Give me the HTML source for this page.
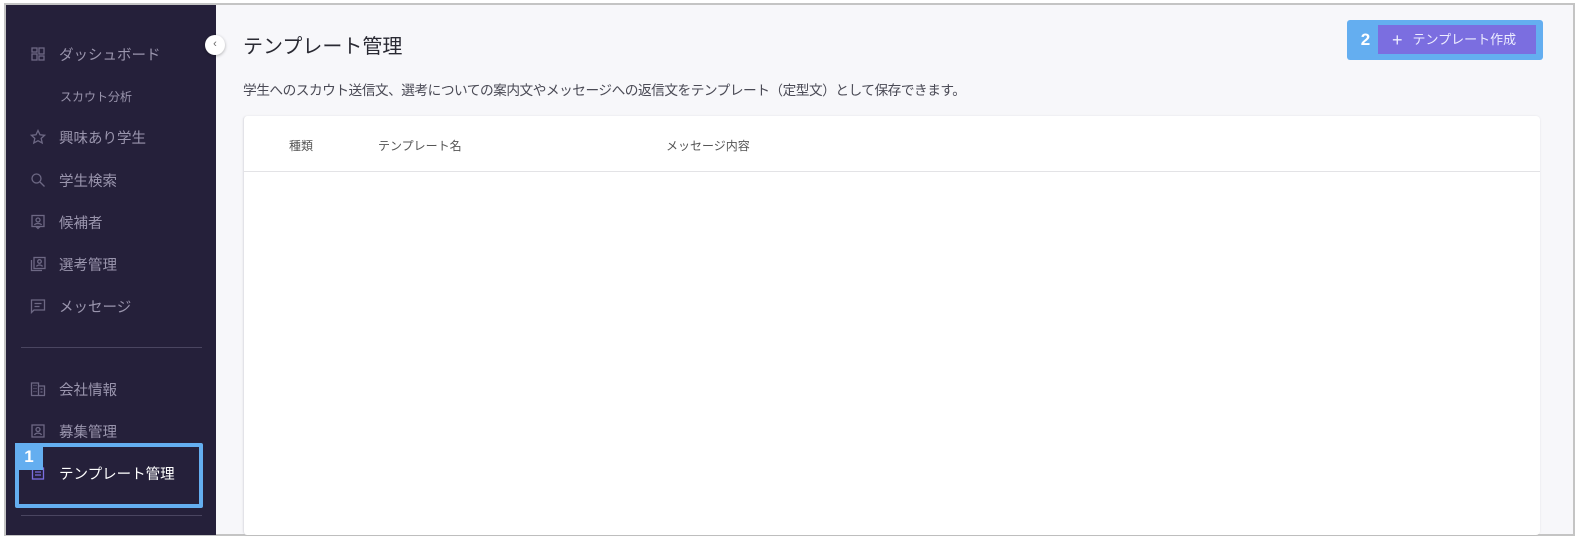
<!DOCTYPE html>
<html><head><meta charset="utf-8"><style>
*{margin:0;padding:0;box-sizing:border-box}
body{width:1580px;height:542px;background:#fff;font-family:"Liberation Sans","Noto Sans CJK JP",sans-serif;position:relative;overflow:hidden}
.frame{position:absolute;left:4px;top:3px;width:1571px;height:533px;border:2px solid #c4c4c4;background:#f7f7fa}
.side{position:absolute;left:6px;top:5px;width:210px;height:530px;background:#25203a}
.item{position:absolute;left:30px;color:#9a95ad;font-size:14.5px;display:flex;align-items:center;height:20px}
.item svg{width:16px;height:16px;margin-right:13px;stroke:#6d6884;fill:none;stroke-width:1.3}
.sub{position:absolute;left:60px;color:#9a95ad;font-size:12px}
.hr{position:absolute;left:21px;width:181px;height:1px;background:#4a4560}
.toggle{position:absolute;left:205px;top:35px;width:20px;height:20px;border-radius:50%;background:#fff;font-size:11px;color:#666;text-align:center;line-height:19px;box-shadow:0 1px 3px rgba(0,0,0,.3)}
.t{position:absolute;left:243px;top:30px;font-size:20px;color:#2a2a33}
.d{position:absolute;left:243px;top:79px;font-size:13.7px;color:#4a4a55;letter-spacing:-0.5px;white-space:nowrap}
.card{position:absolute;left:243px;top:116px;width:1297px;height:419px;background:#fff;border-radius:4px;box-shadow:0 0 2px rgba(0,0,0,.08);border-left:1px solid #e3e3e8}
.th{position:absolute;top:137px;font-size:12px;color:#555}
.line{position:absolute;left:243px;top:171px;width:1297px;height:1px;background:#e3e3e6}
</style></head><body>
<div class="frame"></div>
<div class="side">
</div>
<div class="item" style="top:44px"><svg viewBox="0 0 16 16"><rect x="2" y="2" width="5" height="4"/><rect x="9" y="2" width="5" height="6"/><rect x="2" y="8" width="5" height="6"/><rect x="9" y="10" width="5" height="4"/></svg>ダッシュボード</div>
<div class="sub" style="top:88px">スカウト分析</div>
<div class="item" style="top:127px"><svg viewBox="0 0 16 16"><path d="M8 1.5l2 4.3 4.6.5-3.4 3.1 1 4.6L8 11.7 3.8 14l1-4.6L1.4 6.3 6 5.8z"/></svg>興味あり学生</div>
<div class="item" style="top:170px"><svg viewBox="0 0 16 16"><circle cx="6.5" cy="6.5" r="4.5"/><path d="M10 10l4.5 4.5"/></svg>学生検索</div>
<div class="item" style="top:212px"><svg viewBox="0 0 16 16"><rect x="2" y="1.5" width="12" height="11"/><circle cx="8" cy="6" r="2"/><path d="M4.5 11c1-2 6-2 7 0M6 12.5l2 2 2-2"/></svg>候補者</div>
<div class="item" style="top:254px"><svg viewBox="0 0 16 16"><rect x="4" y="1.5" width="11" height="11"/><path d="M1.5 4v10.5H12"/><circle cx="9.5" cy="5.5" r="1.8"/><path d="M6.5 10.5c1-2 5-2 6 0"/></svg>選考管理</div>
<div class="item" style="top:296px"><svg viewBox="0 0 16 16"><path d="M1.5 2h13v10H4l-2.5 2.5z"/><path d="M4.5 5.5h7M4.5 8.5h5"/></svg>メッセージ</div>
<div class="hr" style="top:347px"></div>
<div class="item" style="top:379px"><svg viewBox="0 0 16 16"><path d="M1.5 14.5V2h7v12.5M8.5 5h6v9.5M1 14.5h14M3.5 4.5h1M5.5 4.5h1M3.5 7.5h1M5.5 7.5h1M3.5 10.5h1M5.5 10.5h1M10.5 8h2M10.5 11h2"/></svg>会社情報</div>
<div class="item" style="top:421px"><svg viewBox="0 0 16 16"><rect x="2" y="2" width="12" height="12"/><circle cx="8" cy="6.5" r="2"/><path d="M4.5 12c1-2.5 6-2.5 7 0"/></svg>募集管理</div>
<div class="item" style="top:463px;color:#fff"><svg viewBox="0 0 16 16" style="stroke:#7b6ee0"><rect x="2.5" y="3" width="11" height="11"/><path d="M5 7h6M5 10h6"/></svg>テンプレート管理</div>
<div class="hr" style="top:515px"></div>
<div style="position:absolute;left:15px;top:443px;width:188px;height:65px;border:4px solid #64aef0;border-radius:2px"></div>
<div style="position:absolute;left:15px;top:443px;width:28px;height:27px;background:#64aef0;color:#fff;font-size:17px;font-weight:bold;text-align:center;line-height:27px">1</div>
<div class="toggle">‹</div>
<div class="t">テンプレート管理</div>
<div class="d">学生へのスカウト送信文、選考についての案内文やメッセージへの返信文をテンプレート（定型文）として保存できます。</div>
<div style="position:absolute;left:1347px;top:20px;width:196px;height:40px;background:#64aef0;border-radius:3px"></div>
<div style="position:absolute;left:1353px;top:25px;width:25px;height:29px;color:#fff;font-size:17px;font-weight:bold;text-align:center;line-height:29px">2</div>
<div style="position:absolute;left:1378px;top:25px;width:158px;height:29px;background:#7b6ee0;color:#eef;font-size:13px;line-height:29px;padding-left:14px;white-space:nowrap"><span style="font-size:18px;vertical-align:-2px;margin-right:10px">+</span>テンプレート作成</div>
<div class="card"></div>
<div class="th" style="left:289px">種類</div>
<div class="th" style="left:378px">テンプレート名</div>
<div class="th" style="left:666px">メッセージ内容</div>
<div class="line"></div>
</body></html>
